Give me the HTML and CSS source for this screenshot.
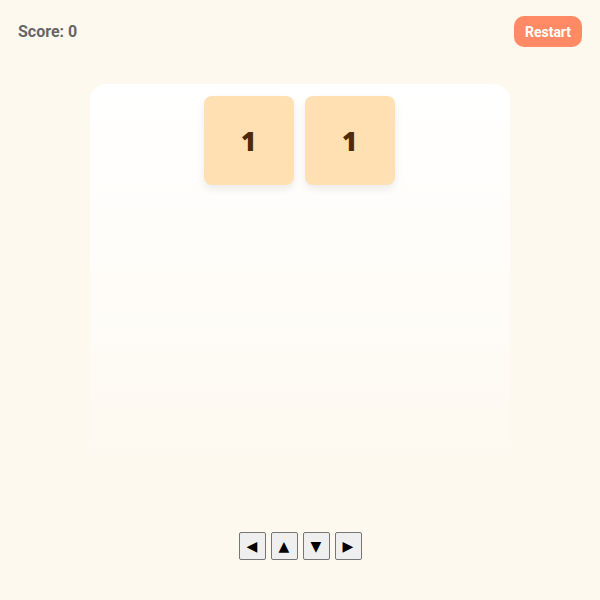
FILE: index.html
```html
<!DOCTYPE html>
<html lang="en">
<head>
  <meta charset="UTF-8" />
  <title>Merge Tiles</title>
  <link rel="stylesheet" href="styles.css">
</head>
<body>
  <div class="app">
    <header class="top-bar">
      <div class="score">Score: <span id="score">0</span></div>
      <button class="restart" id="restartBtn">Restart</button>
    </header>

    <!-- Game board -->
    <div class="board" id="board">
      <div class="row">
        <div class="tile">1</div>
        <div class="tile">1</div>
      </div>
    </div>

    <!-- Arrow controls -->
    <div class="controls">
      <button class="arrow" data-dir="left">&#9664;</button>
      <button class="arrow" data-dir="up">&#9650;</button>
      <button class="arrow" data-dir="down">&#9660;</button>
      <button class="arrow" data-dir="right">&#9654;</button>
    </div>
  </div>
</body>
</html>
```

FILE: styles.css
```css
body {
  margin: 0;
  background-color: #fef9ef;
  font-family: Roboto, "Liberation Sans", Arial, sans-serif;
}

.app {
  height: 600px;
  display: flex;
  flex-direction: column;
  align-items: center;
}

.top-bar {
  align-self: stretch;
  display: flex;
  justify-content: space-between;
  align-items: center;
  padding: 16px 18px 0 18px;
}

.score {
  font-size: 16px;
  font-weight: 700;
  color: #666;
}

.restart {
  background-color: #ff8a65;
  color: #fff;
  border: none;
  border-radius: 10px;
  width: 68px;
  height: 31px;
  padding: 0;
  font-family: inherit;
  font-size: 14px;
  font-weight: 700;
  cursor: pointer;
}

.board {
  margin-top: 37px;
  width: 420px;
  height: 385px;
  box-sizing: border-box;
  padding: 12px 12px 12px 10px;
  border-radius: 16px;
  background: linear-gradient(to bottom, #ffffff 0%, rgba(255, 255, 255, 0.4) 70%, rgba(255, 255, 255, 0) 100%);
}

.row {
  display: flex;
  justify-content: center;
  gap: 11px;
}

.tile {
  width: 90px;
  height: 89px;
  border-radius: 8px;
  background-color: #ffe0b2;
  color: #4e2a0c;
  font-family: "Open Sans", sans-serif;
  font-size: 26px;
  font-weight: 800;
  display: flex;
  align-items: center;
  justify-content: center;
  box-shadow: 0 4px 8px rgba(0, 0, 0, 0.08);
}

.controls {
  margin-top: 63px;
  display: flex;
  gap: 5px;
}

.arrow {
  width: 27px;
  height: 28px;
  padding: 0;
  background-color: #efefef;
  border: 1px solid #767676;
  border-radius: 2px;
  font-size: 14px;
  color: #000;
  font-family: "DejaVu Sans", sans-serif;
  cursor: pointer;
}
```
